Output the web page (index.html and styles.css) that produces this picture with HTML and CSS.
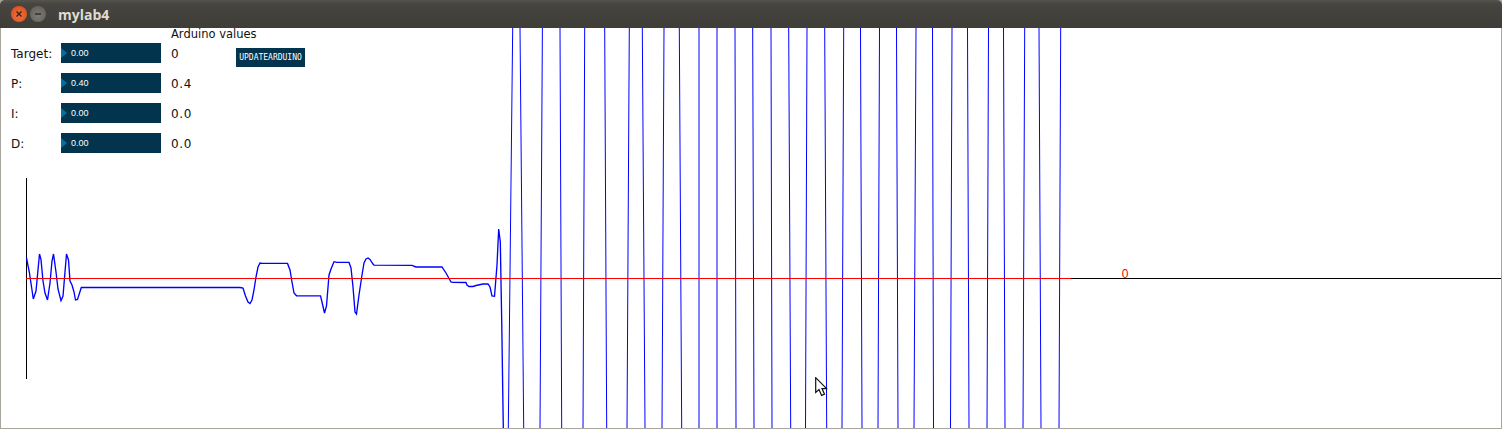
FILE: index.html
```html
<!DOCTYPE html>
<html lang="en">
<head>
<meta charset="utf-8">
<title>mylab4</title>
<link rel="stylesheet" href="styles.css">
</head>
<body>
<div class="window">
  <header class="titlebar">
    <div class="win-buttons">
      <span class="win-btn close"><svg viewBox="0 0 8 8" class="win-glyph"><path d="M1.5 1.5 6.5 6.5M6.5 1.5 1.5 6.5"/></svg></span>
      <span class="win-btn minimize"><svg viewBox="0 0 8 8" class="win-glyph"><path d="M1 4H7"/></svg></span>
    </div>
    <span class="title">mylab4</span>
  </header>
  <main class="canvas">
    <section class="panel">
      <div class="heading">Arduino values</div>
      <div class="row">
        <span class="label">Target:</span>
        <div class="slider"><span class="handle"></span><span class="slider-value">0.00</span></div>
        <span class="value">0</span>
        <button class="action">UPDATEARDUINO</button>
      </div>
      <div class="row">
        <span class="label">P:</span>
        <div class="slider"><span class="handle"></span><span class="slider-value">0.40</span></div>
        <span class="value">0.4</span>
      </div>
      <div class="row">
        <span class="label">I:</span>
        <div class="slider"><span class="handle"></span><span class="slider-value">0.00</span></div>
        <span class="value">0.0</span>
      </div>
      <div class="row">
        <span class="label">D:</span>
        <div class="slider"><span class="handle"></span><span class="slider-value">0.00</span></div>
        <span class="value">0.0</span>
      </div>
    </section>
  </main>
  <svg class="plot" viewBox="0 0 1502 429" width="1502" height="429">
    <defs><clipPath id="plot-area"><rect x="1" y="28" width="1500" height="400"/></clipPath></defs>
    <g clip-path="url(#plot-area)" fill="none">
      <path class="axis" d="M26.5 178V379M26 278.5H1502"/>
      <path class="trace curve" d="M26.5 258 29.3 272 31.7 288 33.3 299 36 291 39.5 254 41 259.5 43 281 45 293 47.5 300 50 283 52 261 53.5 254 56 272 58 289 61 300.7 63 296 66.5 254 68.5 260 70 281 72 285 74 292 75.5 300 77.5 299.5 81.3 287.5 240 287.5 243 288 245.5 296 248 302 250 303.5 252 300 254 290 256 277 258 267 260 263 262 263.4 287.5 263.4 290 270 292 282 294 293 296.5 295.8 320.5 295.8 322 302 324.5 313 326.5 306 329 275 331 269 334 261.7 337 262.4 349 262.4 351 268 353 287 355 312 356.5 314 359 295 362 275 364 263 366 259 368 258 370 259.5 373 264 374 265.2 412 265.4 416 267 442 267 446 273 451 282 453 282.4 466 282.5 467 285 469 286.5 473 286.5 476 285.5 483 284 488 284 490 287 492 296 494.5 296.3 497 265 498.7 229 500.3 242 501.7 320 503.3 428"/>
      <path class="trace" d="M508.3 428 512.7 28M520 28 523.7 428M540 428 542.4 28M560 28 561.7 428M583 428 584.7 28M604.7 28 606.7 428M627 428 629.3 28M642.3 28 645 428M662 428 664 28M679.3 28 681.7 428M699 428 699 28M717 28 717 428M736 428 735 28M752.7 28 754 428M772 428 771 28M788.7 28 790.7 428M805.5 428 807 28M824.7 28 826.7 428M842 428 843.7 28M860.5 28 862 428M878 428 879.5 28M896.5 28 898 428M914 428 916 28M932.5 28 933.5 428M950.5 428 952 28M967.5 28 969 428M987 428 988.5 28M1003.5 28 1005 428M1023 428 1024.7 28M1039 28 1041 428M1059 428 1060.7 28"/>
      <path class="target" d="M26 278.5H1071"/>
      <text class="zero" x="1125" y="278">0</text>
    </g>
  </svg>
  <svg class="pointer" viewBox="0 0 13 20" width="13" height="20">
    <path d="M.7.7V15.5L4 12.5 6.6 18.4 9.5 17.2 7 11.6H11.6Z"/>
  </svg>
</div>
</body>
</html>
```
FILE: styles.css
```css
* {
  box-sizing: border-box;
}

html,
body {
  margin: 0;
  padding: 0;
  background: #a8a59d;
}

body {
  font-family: "DejaVu Sans", sans-serif;
  overflow: hidden;
}

.window {
  position: relative;
  display: flex;
  flex-direction: column;
  width: 1502px;
  height: 429px;
  overflow: hidden;
}

.titlebar {
  display: flex;
  align-items: center;
  flex: 0 0 28px;
  padding-left: 11px;
  border-radius: 5px 5px 0 0;
  background: linear-gradient(#55534c 0, #46453f 4px, #3e3d38 100%);
}

.win-buttons {
  display: flex;
  gap: 3px;
}

.win-btn {
  display: flex;
  align-items: center;
  justify-content: center;
  width: 16px;
  height: 16px;
  border-radius: 50%;
}

.close {
  background: radial-gradient(circle at 50% 60%, #f2703a, #d8481a);
}

.minimize {
  background: radial-gradient(circle at 50% 60%, #7d7b75, #5c5a55);
}

.win-glyph {
  width: 8px;
  height: 8px;
  fill: none;
  stroke-width: 1.4;
  stroke: #33261f;
}

.title {
  margin-left: 12px;
  font-family: "Open Sans", sans-serif;
  font-size: 14px;
  font-weight: 700;
  color: #dfdbd2;
}

.canvas {
  flex: 1;
  background: #fff;
  border: 1px solid #a8a59d;
  border-top: 0;
}

.panel {
  display: flex;
  flex-direction: column;
  padding-left: 10px;
  font-size: 12px;
  color: #111;
}

.heading {
  height: 15px;
  margin-left: 160px;
  font-size: 11.5px;
  line-height: 12px;
}

.row {
  display: flex;
  align-items: flex-start;
  height: 30px;
}

.label {
  width: 50px;
  line-height: 22px;
}

.slider {
  position: relative;
  display: flex;
  align-items: center;
  width: 100px;
  height: 20px;
  padding-left: 10px;
  background: #02344d;
}

.handle {
  position: absolute;
  left: 0;
  top: 5px;
  width: 6px;
  height: 10px;
  background: #0270a2;
  clip-path: polygon(0 0, 100% 50%, 0 100%);
}

.slider-value {
  font-family: "Liberation Sans", sans-serif;
  font-size: 9px;
  color: #fff;
}

.value {
  width: 65px;
  margin-left: 10px;
  letter-spacing: 0.6px;
  line-height: 22px;
}

.action {
  width: 69px;
  height: 19px;
  margin-top: 5px;
  padding: 0;
  border: 0;
  background: #02344d;
  font-family: "DejaVu Sans Mono", monospace;
  font-size: 8px;
  color: #fff;
}

.plot {
  position: absolute;
  top: 0;
  left: 0;
}

.axis {
  stroke: #000;
  stroke-width: 1;
}

.trace {
  stroke: #00f;
  stroke-width: 1;
}

.curve {
  stroke-width: 1.35;
}

.target {
  stroke: #f00;
  stroke-width: 1;
}

.zero {
  font-family: "Liberation Sans", sans-serif;
  font-size: 12px;
  fill: #f00;
  text-anchor: middle;
}

.pointer {
  position: absolute;
  left: 815px;
  top: 377px;
  fill: #fff;
  stroke: #111;
  stroke-width: 1.2;
}
```
